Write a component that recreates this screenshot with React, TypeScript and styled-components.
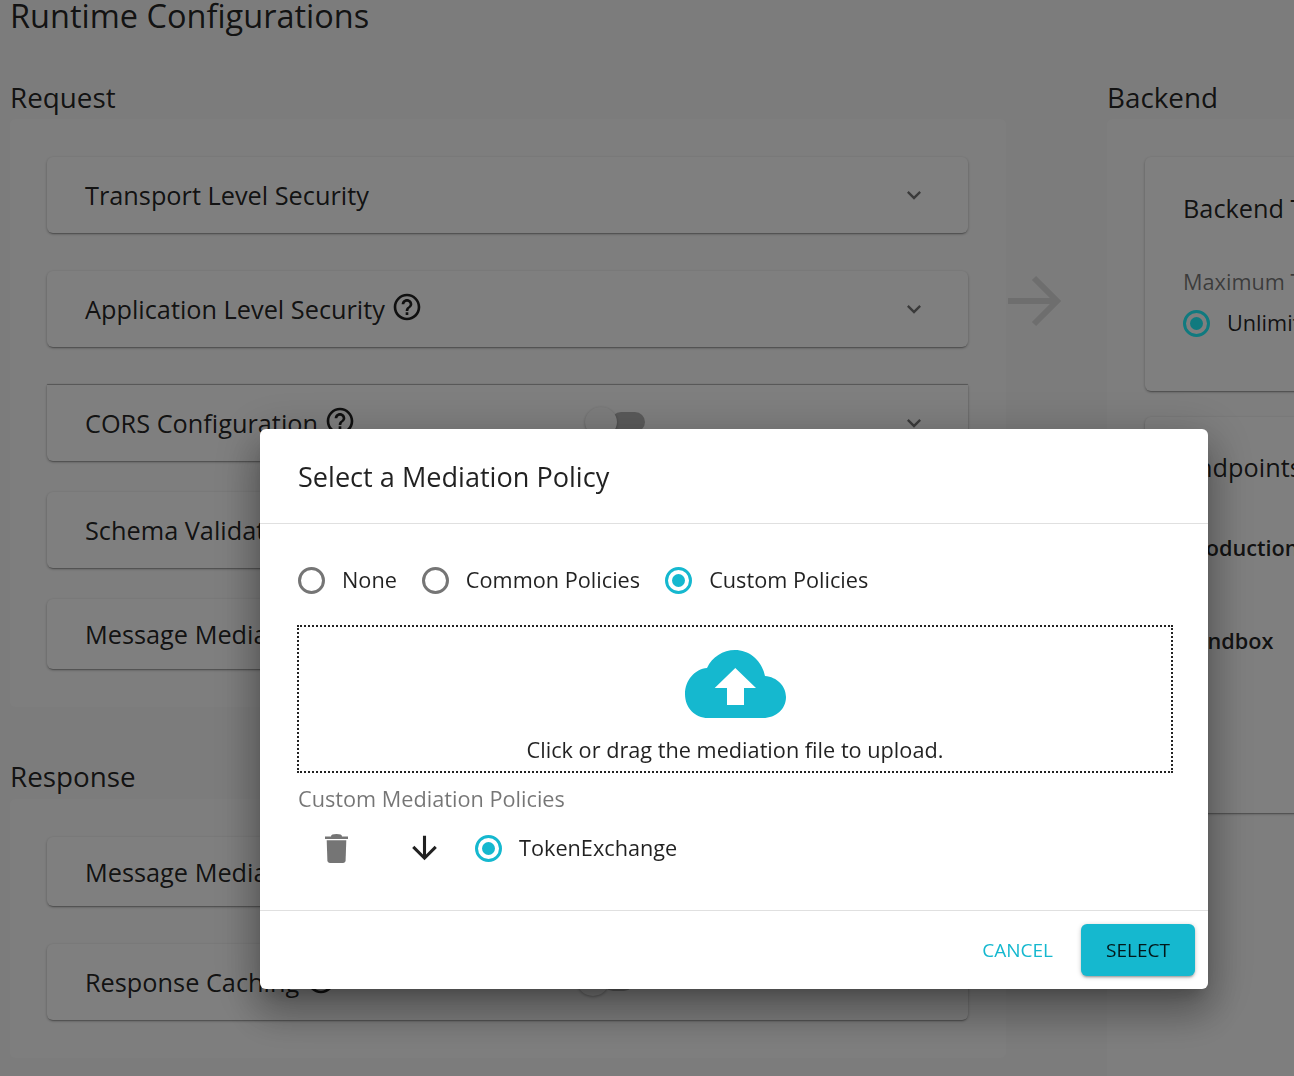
import { createGlobalStyle } from "styled-components";
import styled from "styled-components";

const GlobalStyle = createGlobalStyle`
  html, body {
    margin: 0;
    height: 100%;
    overflow: hidden;
    background: #f9f9f9;
    font-family: "Open Sans", "Liberation Sans", sans-serif;
    color: rgba(0, 0, 0, 0.87);
  }
`;

const primary = "#15b8cf";

const Page = styled.main`
  width: 1600px;
  height: 1076px;
  overflow: hidden;
  padding-left: 10px;
`;

const PageTitle = styled.h1`
  margin: -9px 0 0;
  font-size: 32.5px;
  line-height: 50px;
  font-weight: 400;
`;

const Columns = styled.div`
  display: grid;
  grid-template-columns: 996px 101px 500px;
  margin-top: 38px;
`;

const SectionTitle = styled.h2`
  margin: 0;
  font-size: 27.8px;
  line-height: 36px;
  font-weight: 400;
`;

const Panel = styled.section`
  background: #fdfdfd;
  border-radius: 6px;
  padding: 38px 38px 38px 37px;
  display: flex;
  flex-direction: column;
  margin-top: 4px;
`;

const ResponseTitle = styled(SectionTitle)`
  margin-top: 50px;
  line-height: 38px;
`;

const Card = styled.div<{ $height: number; $gap: number; $edged?: boolean }>`
  height: ${(p) => p.$height}px;
  margin-bottom: ${(p) => p.$gap}px;
  flex-shrink: 0;
  background: #fff;
  border-radius: ${(p) => (p.$edged ? "0 0 6px 6px" : "6px")};
  box-shadow: 0 1px 3px rgba(0, 0, 0, 0.3), 0 2px 1px -1px rgba(0, 0, 0, 0.2)
    ${(p) => (p.$edged ? ", 0 -1px 1px rgba(0, 0, 0, 0.3)" : "")};
  display: flex;
  align-items: center;
  padding: 0 40px 0 38px;
  &:last-child {
    margin-bottom: 0;
  }
`;

const CardLabel = styled.span`
  flex: 1;
  font-size: 25.3px;
  display: flex;
  align-items: center;
  gap: 6px;
`;

const HelpIcon = styled.svg`
  width: 32px;
  height: 32px;
  margin-top: -5px;
  fill: rgba(0, 0, 0, 0.87);
`;

const Chevron = styled.svg`
  width: 28px;
  height: 28px;
  fill: rgba(0, 0, 0, 0.54);
`;

const Toggle = styled.span<{ $right: number; $width: number }>`
  position: relative;
  width: ${(p) => p.$width}px;
  height: 20px;
  margin-top: -2px;
  margin-right: ${(p) => p.$right}px;
  display: block;
  &::before {
    content: "";
    position: absolute;
    left: 26px;
    right: 0;
    top: 0;
    bottom: 0;
    border-radius: 10px;
    background: #b5b5b5;
  }
  &::after {
    content: "";
    position: absolute;
    left: 0;
    top: -5px;
    width: 32px;
    height: 30px;
    border-radius: 50%;
    background: #fafafa;
    box-shadow: 0 1px 3px rgba(0, 0, 0, 0.3);
  }
`;

const ArrowCell = styled.div`
  display: flex;
  justify-content: flex-start;
  padding: 196px 0 0 2px;
`;

const BigArrow = styled.svg`
  width: 53px;
  height: 52px;
  stroke: #dcdcdc;
  stroke-width: 6;
  fill: none;
`;

const RightPanel = styled(Panel)`
  padding-right: 0;
  padding-left: 38px;
  min-height: 900px;
`;

const BackendCard = styled.div`
  height: 234px;
  box-sizing: border-box;
  background: #fff;
  border-radius: 6px;
  box-shadow: 0 1px 3px rgba(0, 0, 0, 0.3), 0 2px 1px -1px rgba(0, 0, 0, 0.2);
  padding: 33px 38px;
`;

const EndpointCard = styled(BackendCard)`
  height: 396px;
  margin-top: 26px;
  padding-top: 32px;
`;

const CardHeading = styled.div`
  font-size: 25.3px;
  line-height: 36px;
`;

const Caption = styled.div`
  font-size: 21.7px;
  line-height: 30px;
  color: rgba(0, 0, 0, 0.54);
  margin-top: 41px;
  margin-bottom: 11px;
`;

const BoldRow = styled.div<{ $top: number }>`
  font-size: 21.7px;
  line-height: 30px;
  font-weight: 600;
  margin-top: ${(p) => p.$top}px;
`;

const Overlay = styled.div`
  position: fixed;
  inset: 0;
  background: rgba(0, 0, 0, 0.5);
  display: flex;
  align-items: flex-start;
  padding: 429px 86px 0 260px;
`;

const Dialog = styled.div`
  width: 948px;
  height: 560px;
  background: #fff;
  border-radius: 6px;
  box-shadow: 0 11px 15px -7px rgba(0, 0, 0, 0.2), 0 24px 38px 3px rgba(0, 0, 0, 0.22),
    0 9px 46px 8px rgba(0, 0, 0, 0.18);
  display: flex;
  flex-direction: column;
`;

const DialogTitle = styled.header`
  height: 95px;
  box-sizing: border-box;
  border-bottom: 1px solid #e0e0e0;
  padding: 0 38px;
  display: flex;
  align-items: center;
  font-size: 27.1px;
`;

const DialogBody = styled.div`
  flex: 1;
  padding: 0 35px 0 37px;
`;

const RadioRow = styled.div`
  display: flex;
  align-items: center;
  height: 101px;
  box-sizing: border-box;
  padding: 11px 0 0 1px;
  gap: 25px;
`;

const RadioOption = styled.label`
  display: flex;
  align-items: center;
  gap: 17px;
  font-size: 21.7px;
  line-height: 30px;
`;

const RadioDot = styled.span<{ $color?: string }>`
  width: 27px;
  height: 27px;
  box-sizing: border-box;
  border-radius: 50%;
  border: 3px solid ${(p) => p.$color ?? "rgba(0, 0, 0, 0.54)"};
  display: flex;
  align-items: center;
  justify-content: center;
  flex-shrink: 0;
  &::after {
    content: "";
    display: ${(p) => (p.$color ? "block" : "none")};
    width: 13px;
    height: 13px;
    border-radius: 50%;
    background: ${(p) => p.$color};
  }
`;

const DropZone = styled.div`
  height: 148px;
  box-sizing: border-box;
  border: 2px dotted #222;
  display: flex;
  flex-direction: column;
  align-items: center;
  padding-top: 23px;
  font-size: 21.7px;
  color: rgba(0, 0, 0, 0.87);
  line-height: 30px;
`;

const UploadIcon = styled.svg`
  width: 101px;
  height: 68px;
  margin-bottom: 17px;
  flex-shrink: 0;
`;

const ListCaption = styled.div`
  font-size: 21.7px;
  line-height: 30px;
  color: rgba(0, 0, 0, 0.54);
  margin-top: 11px;
  padding-left: 1px;
`;

const PolicyRow = styled.div`
  display: flex;
  align-items: center;
  margin-top: 13px;
  height: 42px;
`;

const TrashIcon = styled.svg`
  width: 23px;
  height: 29px;
  fill: #757575;
  margin-left: 28px;
  flex-shrink: 0;
`;

const DownArrow = styled.svg`
  width: 37px;
  height: 38px;
  margin-left: 58px;
  fill: rgba(0, 0, 0, 0.87);
  flex-shrink: 0;
`;

const PolicyRadio = styled(RadioOption)`
  margin-left: 32px;
`;

const DialogFooter = styled.footer`
  height: 79px;
  box-sizing: border-box;
  border-top: 1px solid #e0e0e0;
  display: flex;
  align-items: center;
  justify-content: flex-end;
  gap: 28px;
  padding: 0 13px 0 0;
`;

const TextButton = styled.button`
  border: 0;
  background: none;
  padding: 0;
  font: inherit;
  font-size: 19px;
  color: ${primary};
`;

const SolidButton = styled.button`
  width: 114px;
  height: 52px;
  border: 0;
  border-radius: 6px;
  background: ${primary};
  font: inherit;
  font-size: 19px;
  color: rgba(0, 0, 0, 0.87);
  box-shadow: 0 1px 5px rgba(0, 0, 0, 0.2), 0 2px 2px rgba(0, 0, 0, 0.14), 0 3px 1px -2px rgba(0, 0, 0, 0.12);
`;

const helpPath =
  "M11 18h2v-2h-2v2zm1-16C6.48 2 2 6.48 2 12s4.48 10 10 10 10-4.48 10-10S17.52 2 12 2zm0 18c-4.41 0-8-3.59-8-8s3.59-8 8-8 8 3.59 8 8-3.59 8-8 8zm0-14c-2.21 0-4 1.79-4 4h2c0-1.1.9-2 2-2s2 .9 2 2c0 2-3 1.75-3 5h2c0-2.25 3-2.5 3-5 0-2.21-1.79-4-4-4z";

const Help = () => (
  <HelpIcon viewBox="0 0 24 24">
    <path d={helpPath} />
  </HelpIcon>
);

const Expand = () => (
  <Chevron viewBox="0 0 24 24">
    <path d="M16.59 8.59L12 13.17 7.41 8.59 6 10l6 6 6-6z" />
  </Chevron>
);

const App = () => {
  return (
    <>
      <GlobalStyle />
      <Page>
        <PageTitle>Runtime Configurations</PageTitle>
        <Columns>
          <div>
            <SectionTitle>Request</SectionTitle>
            <Panel>
              <Card $height={76} $gap={38}>
                <CardLabel>Transport Level Security</CardLabel>
                <Expand />
              </Card>
              <Card $height={76} $gap={38}>
                <CardLabel>
                  Application Level Security <Help />
                </CardLabel>
                <Expand />
              </Card>
              <Card $height={76} $gap={31} $edged>
                <CardLabel>
                  CORS Configuration <Help />
                </CardLabel>
                <Toggle $right={255} $width={60} />
                <Expand />
              </Card>
              <Card $height={76} $gap={31}>
                <CardLabel>Schema Validation</CardLabel>
                <Expand />
              </Card>
              <Card $height={70} $gap={0}>
                <CardLabel>Message Mediation</CardLabel>
                <Expand />
              </Card>
            </Panel>
            <ResponseTitle>Response</ResponseTitle>
            <Panel>
              <Card $height={69} $gap={38}>
                <CardLabel>Message Mediation</CardLabel>
                <Expand />
              </Card>
              <Card $height={76} $gap={0}>
                <CardLabel>
                  Response Caching <Help />
                </CardLabel>
                <Toggle $right={266} $width={57} />
                <Expand />
              </Card>
            </Panel>
          </div>
          <ArrowCell>
            <BigArrow viewBox="0 0 53 52">
              <path d="M0 26h49M26 3l23 23-23 23" />
            </BigArrow>
          </ArrowCell>
          <div>
            <SectionTitle>Backend</SectionTitle>
            <RightPanel>
              <BackendCard>
                <CardHeading>Backend Throughput</CardHeading>
                <Caption>Maximum Throughput</Caption>
                <RadioOption>
                  <RadioDot $color="#20f4ff" />
                  Unlimited
                </RadioOption>
              </BackendCard>
              <EndpointCard>
                <CardHeading>Endpoints</CardHeading>
                <BoldRow $top={48}>Production</BoldRow>
                <BoldRow $top={63}>Sandbox</BoldRow>
              </EndpointCard>
            </RightPanel>
          </div>
        </Columns>
      </Page>
      <Overlay>
        <Dialog>
          <DialogTitle>Select a Mediation Policy</DialogTitle>
          <DialogBody>
            <RadioRow>
              <RadioOption>
                <RadioDot />
                None
              </RadioOption>
              <RadioOption>
                <RadioDot />
                Common Policies
              </RadioOption>
              <RadioOption>
                <RadioDot $color={primary} />
                Custom Policies
              </RadioOption>
            </RadioRow>
            <DropZone>
              <UploadIcon viewBox="0 0 101 68">
                <path
                  fill={primary}
                  d="M23 68C10 68 0 58 0 44C0 30 10 19 22 18C27 7 38 0 50 0C65 0 77 11 80 26C92 27 101 36 101 47C101 59 91 68 78 68Z"
                />
                <path fill="#fff" d="M50.3 18L71 38H59V55H42V38H29.7Z" />
              </UploadIcon>
              Click or drag the mediation file to upload.
            </DropZone>
            <ListCaption>Custom Mediation Policies</ListCaption>
            <PolicyRow>
              <TrashIcon viewBox="0 0 23 29">
                <path d="M6 2.4C6 .8 8 0 11.5 0S17 .8 17 2.4H23V5H0V2.4Z" />
                <path d="M1.7 6.2H21.3L20.6 26.5C20.5 28 19.5 29 18 29H5C3.5 29 2.5 28 2.4 26.5Z" />
              </TrashIcon>
              <DownArrow viewBox="0 0 24 24">
                <path d="M20 12l-1.41-1.41L13 16.17V4h-2v12.17l-5.58-5.59L4 12l8 8 8-8z" />
              </DownArrow>
              <PolicyRadio>
                <RadioDot $color={primary} />
                TokenExchange
              </PolicyRadio>
            </PolicyRow>
          </DialogBody>
          <DialogFooter>
            <TextButton>CANCEL</TextButton>
            <SolidButton>SELECT</SolidButton>
          </DialogFooter>
        </Dialog>
      </Overlay>
    </>
  );
};

export default App;
